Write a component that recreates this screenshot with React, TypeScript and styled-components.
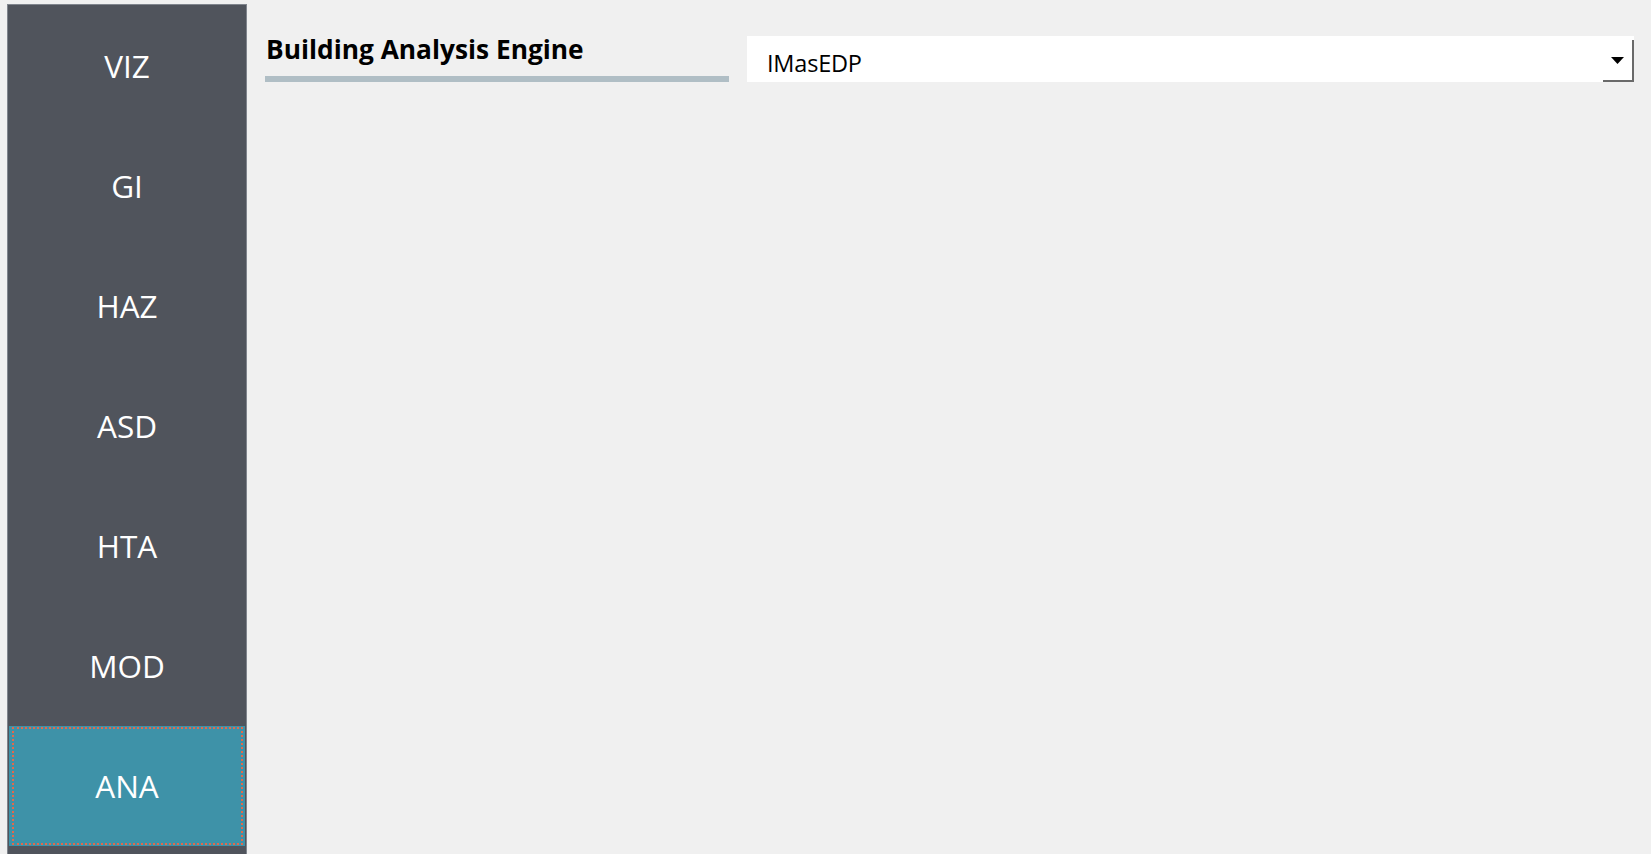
import React from "react";
import styled, { createGlobalStyle } from "styled-components";

const GlobalStyle = createGlobalStyle`
  html, body {
    margin: 0;
    padding: 0;
    background: #f0f0f0;
    height: 100%;
    overflow: hidden;
  }
  #root {
    height: 100%;
  }
`;

const Page = styled.div`
  display: flex;
  align-items: flex-start;
  height: 100vh;
  padding: 4px 17px 0 7px;
  box-sizing: border-box;
  gap: 18px;
  font-family: "Open Sans", "Noto Sans", "Liberation Sans", sans-serif;
`;

const Sidebar = styled.nav`
  flex: 0 0 240px;
  box-sizing: border-box;
  height: calc(100vh - 4px);
  background: #50545c;
  border: 1px solid #80858d;
  border-bottom: none;
  padding: 1px 1px 0 1px;
  display: flex;
  flex-direction: column;
  overflow: hidden;
`;

const NavButton = styled.button<{ $active?: boolean }>`
  position: relative;
  flex: 0 0 120px;
  height: 120px;
  width: 100%;
  margin: 0;
  border: none;
  padding: 0 0 2px 0;
  background: ${(p) => (p.$active ? "#3e92a8" : "#50545c")};
  color: #ffffff;
  font-family: "Open Sans", "Noto Sans", sans-serif;
  font-size: 31.5px;
  font-weight: 400;
  display: flex;
  align-items: center;
  justify-content: center;
  cursor: pointer;

  &::after {
    content: "";
    display: ${(p) => (p.$active ? "block" : "none")};
    position: absolute;
    left: 3px;
    right: 2px;
    top: 1px;
    bottom: 1px;
    border: 2px dotted #e2694c;
    pointer-events: none;
  }
`;

const Content = styled.main`
  flex: 1;
  display: flex;
  align-items: flex-start;
  gap: 18px;
  padding-top: 32px;
`;

const HeadingBlock = styled.div`
  flex: 0 0 464px;
  display: flex;
  flex-direction: column;
`;

const Heading = styled.h2`
  margin: 0;
  padding-left: 1px;
  font-family: "Open Sans", "Noto Sans", sans-serif;
  font-weight: 700;
  font-size: 26.3px;
  line-height: 27px;
  color: #000;
  letter-spacing: 0;
`;

const HeadingRule = styled.div`
  height: 6px;
  margin-top: 13px;
  background: #b0bec5;
`;

const Select = styled.div`
  flex: 1;
  height: 46px;
  background: #ffffff;
  display: flex;
  align-items: stretch;
  justify-content: space-between;
  box-sizing: border-box;
`;

const SelectValue = styled.span`
  padding-left: 20px;
  padding-top: 8px;
  align-self: center;
  font-family: "Open Sans", "Noto Sans", sans-serif;
  font-size: 23.5px;
  color: #000;
  letter-spacing: -0.2px;
`;

const ArrowButton = styled.div`
  margin-top: 4px;
  width: 31px;
  box-sizing: border-box;
  border-right: 2px solid #6a6a6a;
  border-bottom: 2px solid #6a6a6a;
  display: flex;
  align-items: center;
  justify-content: center;
  padding-right: 1px;
`;

const items = ["VIZ", "GI", "HAZ", "ASD", "HTA", "MOD", "ANA"];

export default function App() {
  return (
    <>
      <GlobalStyle />
      <Page>
        <Sidebar>
          {items.map((it) => (
            <NavButton key={it} $active={it === "ANA"}>
              {it}
            </NavButton>
          ))}
        </Sidebar>
        <Content>
          <HeadingBlock>
            <Heading>Building Analysis Engine</Heading>
            <HeadingRule />
          </HeadingBlock>
          <Select>
            <SelectValue>IMasEDP</SelectValue>
            <ArrowButton>
              <svg width="13" height="7" viewBox="0 0 13 7">
                <path d="M0 0 H13 L6.5 7 Z" fill="#000" />
              </svg>
            </ArrowButton>
          </Select>
        </Content>
      </Page>
    </>
  );
}
